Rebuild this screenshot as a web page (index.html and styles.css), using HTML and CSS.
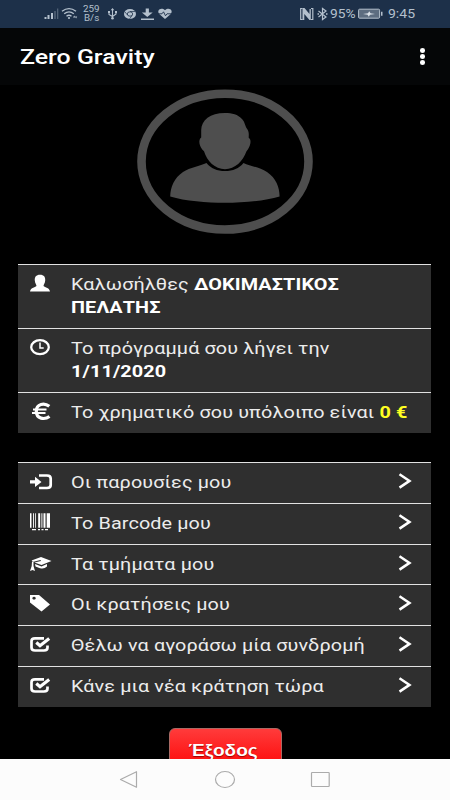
FILE: index.html
```html
<!DOCTYPE html>
<html lang="el">
<head>
<meta charset="utf-8">
<title>Zero Gravity</title>
<link rel="stylesheet" href="styles.css">
</head>
<body>
<svg width="0" height="0" class="defs">
  <symbol id="chevron" viewBox="0 0 14 16"><path d="M1.5 1.2 11.5 7.9 1.5 14.6" fill="none" stroke="#fff" stroke-width="2.5"/></symbol>
  <symbol id="check" viewBox="0 0 24 20"><path d="M14 3.400H5Q1.500 3.400 1.500 6.200V12.500Q1.500 15.500 5 15.500H14Q17.500 15.500 17.500 12.500V10.500" fill="none" stroke="#fff" stroke-width="2.700"/><path d="M6.300 7.500 10 10.700 19.200 3.500" fill="none" stroke="#fff" stroke-width="3.200"/></symbol>
</svg>
<div class="phone">
  <header class="status">
    <div class="status-left">
      <svg width="132" height="28" viewBox="0 0 132 28">
        <g fill="#b4c0cd"><path d="M1.500 17h2v2h-2zM4.500 15h2v4h-2zM8 13h2v6H8z"/><path d="M11.200 11h1.600v8h-1.600zM14 8.500h1.300v10.500H14z" opacity=".35"/></g>
        <g transform="translate(1 0)">
        <g fill="none" stroke="#b4c0cd" stroke-width="1.400"><path d="M18 11.300Q25 6 32 11.300M20.200 13.800Q25 10 29.800 13.800M22.500 16.200Q25 14.300 27.500 16.200"/></g>
        <circle cx="25" cy="18" r="1.100" fill="#b4c0cd"/><path d="M29 17.500l1.200-2 1.200 2zM31 16.500h2.200l-1.100 2z" fill="#b4c0cd"/>
        <g fill="none" stroke="#b4c0cd" stroke-width="1.100"><path d="M68.500 9v9M65 12v2.500l3.500 2 3.500-2.500v-2"/></g><path d="M66.700 10.300 68.500 8l1.800 2.300zM64 11h2v2h-2zM71 11h2v2h-2z" fill="#b4c0cd"/><circle cx="68.500" cy="18.300" r="1.300" fill="#b4c0cd"/>
        <ellipse cx="86" cy="14" rx="6" ry="5" fill="#b4c0cd"/><ellipse cx="86" cy="14" rx="2.700" ry="2.200" fill="#b4c0cd" stroke="#1d3049" stroke-width=".8"/><path d="M86 11.500h5M83.500 15 81 12M88 15.500 85.500 19" stroke="#1d3049" stroke-width=".7"/>
        <path d="M101.700 8.500h3.200v4h3.800L103.300 17l-5.400-4.500h3.800zM97 18.500h13v1.400H97z" fill="#b4c0cd"/>
        <path d="M121 19l-5.500-4.800C112 10.500 117 6.500 121 10.300 125 6.500 130 10.500 126.500 14.200z" fill="#b4c0cd"/><path d="M114 13.800h4l1.500-2 2 4 1.500-2h5" fill="none" stroke="#1d3049" stroke-width=".9"/>
        </g>
      </svg>
      <div class="rate"><span>259</span><span>B/s</span></div>
    </div>
    <div class="status-right">
      <svg width="29" height="14" viewBox="0 0 29 14"><path d="M2.500 1.500H.7v11h2M11 1.500h1.800v11H11" fill="none" stroke="#b4c0cd" stroke-width="1.200"/><path d="M2.500 1h2l5 6V2h1.300v11H9.500L4.300 7V13H2.500z" fill="#b4c0cd"/><path d="M18.500 4l7.500 6-3.500 2.500V1.500l3.500 2.500-7.500 6" fill="none" stroke="#b4c0cd" stroke-width="1.200"/><path d="M17.500 6.300H19v1.400h-1.500zM26 6.300h1.500v1.400H26z" fill="#b4c0cd"/></svg>
      <span class="pct">95%</span>
      <svg width="26" height="12" viewBox="0 0 26 12"><rect x=".6" y="1.200" width="21" height="9" rx="1" fill="#5d6d80" stroke="#b4c0cd" stroke-width="1"/><path d="M23 3.800h1.500v4H23z" fill="#b4c0cd"/><path d="M5 6l5-.8 1.200-2 1.300 2L17 6l-5 .8-1.200 2-1.200-2z" fill="#dce3ea"/></svg>
      <span class="time">9:45</span>
    </div>
  </header>
  <div class="appbar">
    <h1>Zero Gravity</h1>
    <div class="dots"><i></i><i></i><i></i></div>
  </div>
  <main>
    <svg class="avatar" width="180" height="149" viewBox="0 -1 180 149">
      <ellipse cx="90" cy="75.600" rx="83.500" ry="67.900" fill="none" stroke="#4e4e4e" stroke-width="8.600"/>
      <path d="M90 27.000C97 27 103 28.500 107 33 110 36 109.500 39 112.500 43.500 114.500 47 113.600 50 113.800 52 117 53.500 115.500 61 111.500 65.300 108 75 100 83.300 90 83.300 80 83.300 72 75 69 65.300 64 61 63 53.500 66.200 51.500V44C66.500 34 75 27 90 27z" fill="#4e4e4e"/>
      <path d="M71.500 77C76 82.500 82 85 90 85S104 82.500 108.500 77C115 80 125 81.500 132 86 141 92 144.500 101 144.600 110.500 130 115 108 116.800 90 116.800S50 115 35.200 110.500C35.500 101 39 92 48 86 55 81.500 65 80 71.500 77z" fill="#4e4e4e"/>
    </svg>
    <ul class="list info">
      <li><svg class="icon" viewBox="0 0 24 20"><path d="M10 .7C14 .7 15.500 3 15.200 6.500 15 9.500 13.500 10.500 13.500 12 14 13 19.500 13.500 20 17.500H0C.5 13.500 6 13 6.500 12 6.500 10.500 5 9.500 4.800 6.500 4.500 3 6 .7 10 .7z" fill="#fff"/></svg><div class="text"><p>Καλωσήλθες <b>ΔΟΚΙΜΑΣΤΙΚΟΣ</b></p><p><b>ΠΕΛΑΤΗΣ</b></p></div></li>
      <li><svg class="icon" viewBox="0 0 24 20"><ellipse cx="10" cy="9.200" rx="8.800" ry="7" fill="none" stroke="#fff" stroke-width="2.300"/><path d="M10 4.500V10h3.700" fill="none" stroke="#fff" stroke-width="1.500"/></svg><div class="text"><p>Το πρόγραμμά σου λήγει την</p><p><b>1/11/2020</b></p></div></li>
      <li><svg class="icon" viewBox="0 0 24 20"><path d="M19.300 4.300C14.500.5 6.300 1.500 6.300 9.300S14.500 18 19.500 14.500" fill="none" stroke="#fff" stroke-width="3.200"/><path d="M3 7.500h13.500M2 11h13.500" stroke="#fff" stroke-width="1.900"/></svg><div class="text"><p>Το χρηματικό σου υπόλοιπο είναι <b class="due">0 €</b></p></div></li>
    </ul>
    <ul class="list menu">
      <li><svg class="icon" viewBox="0 0 24 20"><path d="M0 8.300h5V4.700l6.500 5.200L5 15.100V11.500H0z" fill="#fff"/><path d="M9 3.500h8Q20.700 3.500 20.700 6.500v6.500Q20.700 16 17 16H9" fill="none" stroke="#fff" stroke-width="2.700"/></svg><div class="text"><p>Οι παρουσίες μου</p></div><svg class="go"><use href="#chevron"/></svg></li>
      <li><svg class="icon" viewBox="0 0 24 20"><path d="M0 .3h1.500v14.500H0zM3 .3h.9v14.500H3zM5 .3h.8v14.500H5zM8.200.3h2v14.500h-2zM11.400.3h1v14.500h-1zM13.500.3h2v14.500h-2zM16.700.3H20v14.500h-3.300zM2 16h4v1.300H2zM8 16h2v1.300H8zM11.500 16h2v1.300h-2zM15 16h3v1.300h-3z" fill="#fff"/></svg><div class="text"><p>Το Barcode μου</p></div><svg class="go"><use href="#chevron"/></svg></li>
      <li><svg class="icon" viewBox="0 -1 24 20"><path d="M11 2 21.500 6 11.500 10 4.500 7.500 11 5.900 10.500 5 3.500 6.700 1.500 5.500z" fill="#fff"/><path d="M5 9l6.500 2.500L17 9v2.500Q14 14.500 10 13.200L5.500 11.500zM2 6.500h1.500V11L5 16 2.500 15 0 16 1.700 11z" fill="#fff"/></svg><div class="text"><p>Τα τμήματα μου</p></div><svg class="go"><use href="#chevron"/></svg></li>
      <li><svg class="icon" viewBox="0 0 24 20"><path d="M0 1h9l11 9.500-8.500 7L0 8.500zM4 2.800a1.700 1.400 0 1 0 .1 0z" fill="#fff" fill-rule="evenodd"/></svg><div class="text"><p>Οι κρατήσεις μου</p></div><svg class="go"><use href="#chevron"/></svg></li>
      <li><svg class="icon"><use href="#check"/></svg><div class="text"><p>Θέλω να αγοράσω μία συνδρομή</p></div><svg class="go"><use href="#chevron"/></svg></li>
      <li><svg class="icon"><use href="#check"/></svg><div class="text"><p>Κάνε μια νέα κράτηση τώρα</p></div><svg class="go"><use href="#chevron"/></svg></li>
    </ul>
    <button class="exit"><span>Έξοδος</span></button>
  </main>
  <nav>
    <svg width="450" height="41" viewBox="0 0 450 41" fill="none" stroke="#ababab" stroke-width="1.200"><path d="M136.500 12.700v15.500L120.500 20.500z" stroke-linejoin="round"/><ellipse cx="225" cy="20.500" rx="9.500" ry="8"/><rect x="311.500" y="13.500" width="17.700" height="14" rx=".7"/></svg>
  </nav>
</div>
</body>
</html>
```

FILE: styles.css
```css
* { box-sizing: border-box; }
body { margin: 0; background: #000; color: #ececec; font-family: Roboto, sans-serif; }
.defs { position: absolute; }
.phone { display: flex; flex-direction: column; width: 450px; height: 800px; overflow: hidden; }
.status { display: flex; justify-content: space-between; flex: none; height: 28px; padding-left: 43px; background: #1d3049; color: #b4c0cd; }
.status-left { position: relative; display: flex; }
.rate { position: absolute; left: 40px; top: 5px; width: 17px; display: flex; flex-direction: column; align-items: center; font-size: 8.500px; line-height: 9.300px; }
.rate span { transform: scaleX(1.15); }
.status-right { display: flex; align-items: center; width: 150px; }
.status-right span { display: block; font-size: 12.500px; line-height: 28px; white-space: nowrap; transform-origin: left; transform: scaleX(1.1); }
.status-right .pct { width: 29px; padding-left: 1px; }
.status-right .time { margin-left: 4px; transform: scaleX(1.12); }
.appbar { display: flex; flex: none; justify-content: space-between; height: 57px; padding: 0 25px 0 20px; background: #050607; }
h1 { margin: 0; font-size: 20px; font-weight: 500; line-height: 59px; color: #fff; white-space: nowrap; transform: scaleX(1.245); transform-origin: left; }
.dots { display: flex; flex-direction: column; gap: 1.700px; padding-top: 20px; }
.dots i { width: 5px; height: 4.500px; border-radius: 50%; background: #fff; }
main { display: flex; flex-direction: column; flex: none; height: 674px; overflow: hidden; }
.avatar { flex: none; margin-left: 135px; }
.list { flex: none; list-style: none; width: 413px; margin: 0 0 0 18.400px; padding: 0; }
.list li { display: flex; align-items: flex-start; border-top: 1.500px solid #e2e2e2; background: #2f2f2f; padding-left: 11.600px; }
.info { margin-top: 30px; }
.info li { height: 64px; }
.info li:last-child { height: 41px; }
.menu { margin-top: 29px; }
.menu li { height: 40.750px; }
.icon { flex: none; width: 24px; height: 20px; margin: 9px 17px 0 0; }
.text { flex: 1; padding-top: 8px; }
.text p { margin: 0; width: 280px; font-size: 16.500px; line-height: 23.400px; letter-spacing: .1px; white-space: nowrap; transform: scaleX(1.2); transform-origin: left; }
.text b { font-weight: 700; color: #fff; }
.text .due { color: #ff2; }
.go { flex: none; width: 14px; height: 16px; margin: 10px 19px 0 0; }
.exit { flex: none; align-self: center; width: 113px; height: 44px; margin: 21px 0 0; padding: 0; border: 1px solid #a96a64; border-radius: 6px; background: linear-gradient(#ff3b3b, #fe1212 75%); color: #fff; font: bold 16px/44px "Liberation Sans", sans-serif; text-shadow: 0 1px 1px #900; }
.exit span { display: inline-block; margin-right: 3px; transform: scaleX(1.19); }
nav { flex: none; height: 41px; background: #fcfcfc; }
nav svg { display: block; }
```
